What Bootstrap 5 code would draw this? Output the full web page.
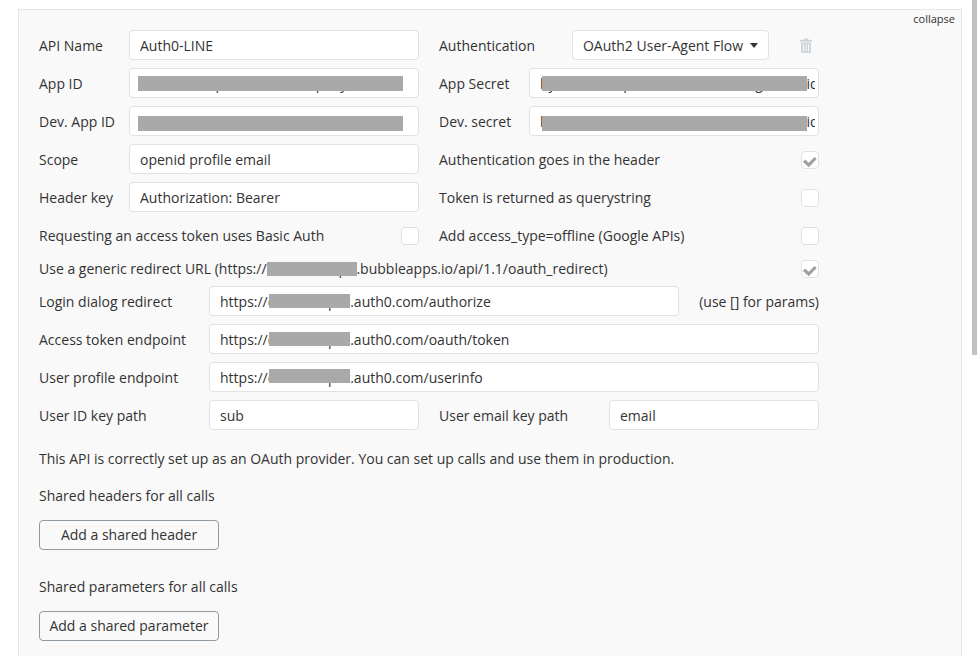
<!DOCTYPE html>
<html lang="en">
<head>
<meta charset="utf-8">
<title>API settings</title>
<link href="https://cdn.jsdelivr.net/npm/bootstrap@5.3.0/dist/css/bootstrap.min.css" rel="stylesheet">
<style>
html,body{height:100%;overflow:hidden;background:#fff;}
body{font-family:"Open Sans",sans-serif;font-size:14px;line-height:20px;color:#333;}
.scroll-thumb{position:fixed;top:0;right:0;width:5px;height:355px;background:#c1c1c1;}
.api-panel{position:relative;margin:9px 15px 0 18px;height:800px;padding:20px 0 0 20px;background:#f9f9f9;border:1px solid #e5e5e5;}
.collapse-link{position:absolute;top:1px;right:6px;font-size:11px;color:#333;text-decoration:none;line-height:16px;}
.form-area{width:780px;}
.line{display:flex;align-items:center;height:30px;margin-bottom:8px;}
.line-check{margin-bottom:3px;}
.line-generic{margin-bottom:3px;}
.half{display:flex;align-items:center;width:380px;flex:none;}
.half+.half{margin-left:20px;}
.lab{flex:none;white-space:nowrap;padding-top:2px;}
.w90{width:90px;}.w170{width:170px;}.w133{width:133px;}
.field{position:relative;flex:1 1 0;min-width:0;}
.api-input.form-control{display:block;width:100%;height:30px;padding:0 10px;font-size:14px;line-height:20px;color:#333;background:#fff;border:1px solid #e1e1e1;border-radius:4px;box-shadow:none;font-family:"Open Sans",sans-serif;}
.api-input.tight-end{padding-right:3px;}
.redact{position:absolute;background:#a9a9a9;}
.rid{left:9px;width:265px;height:15px;top:8px;}
.rsec{left:13px;width:265px;height:15px;top:8px;}
.rdev{top:10px;}
.rurl{left:60px;width:81px;height:14px;top:8px;}
.ruser{top:7px;}
.tick{flex:none;margin-left:auto;margin-top:2px;width:18px;height:18px;background:#fff;border:1px solid #e1e1e1;border-radius:4px;display:flex;align-items:center;justify-content:center;}
.tick svg{display:block;}
.auth-btn.btn{width:197px;height:30px;padding:1px 0 0;font-size:14px;line-height:20px;color:#333;background:#fff;border:1px solid #e1e1e1;border-radius:4px;font-family:"Open Sans",sans-serif;}
.auth-btn.dropdown-toggle::after{margin-left:7px;vertical-align:3px;border-top-width:5px;border-left-width:4px;border-right-width:4px;}
.trash{margin:1px 0 0 31px;flex:none;display:block;}
.params-note{margin-left:20px;white-space:nowrap;padding-top:2px;}
.redir{position:relative;}
.redir-bar{position:absolute;left:228px;top:5px;width:90px;height:14px;background:#a9a9a9;}
.status{margin:19px 0 0;}
.sect{margin:17px 0 14px;}
.sect2{margin:27px 0 14px;}
.add-btn.btn{display:block;width:180px;height:30px;padding:0;font-size:14px;line-height:20px;color:#333;background:transparent;border:1px solid #8e9ba3;border-radius:4px;font-family:"Open Sans",sans-serif;}
</style>
</head>
<body>
<div class="scroll-thumb"></div>
<div class="api-panel">
  <a class="collapse-link" href="#">collapse</a>
  <div class="form-area">
    <div class="line">
      <div class="half"><span class="lab w90">API Name</span><div class="field"><input class="form-control api-input" value="Auth0-LINE"></div></div>
      <div class="half"><span class="lab w133">Authentication</span>
        <div class="dropdown"><button class="btn auth-btn dropdown-toggle" type="button" data-bs-toggle="dropdown">OAuth2 User-Agent Flow</button></div>
        <svg class="trash" width="12" height="15" viewBox="0 0 12 15" fill="#cdd5d9"><path d="M4 .4h4l.8 1.6H12v1.7H0V2h3.2zM1 4.6h10v8.9A1.5 1.5 0 0 1 9.500 15h-7A1.500 1.500 0 0 1 1 13.500zM3 6v7.300h1V6zm2.500 0v7.300h1V6zM8 6v7.300h1V6z"/></svg>
      </div>
    </div>
    <div class="line">
      <div class="half"><span class="lab w90">App ID</span><div class="field"><input class="form-control api-input" value="123456789lp12345678901lp12y123456"><span class="redact rid"></span></div></div>
      <div class="half"><span class="lab w90">App Secret</span><div class="field"><input class="form-control api-input tight-end" value="by12345678lp123456789012345lg12345liq"><span class="redact rsec"></span></div></div>
    </div>
    <div class="line">
      <div class="half"><span class="lab w90">Dev. App ID</span><div class="field"><input class="form-control api-input" value="123456789lp12345678901lp12y123456"><span class="redact rid rdev"></span></div></div>
      <div class="half"><span class="lab w90">Dev. secret</span><div class="field"><input class="form-control api-input tight-end" value="by12345678lp123456789012345lg12345liq"><span class="redact rsec rdev"></span></div></div>
    </div>
    <div class="line">
      <div class="half"><span class="lab w90">Scope</span><div class="field"><input class="form-control api-input" value="openid profile email"></div></div>
      <div class="half"><span class="lab">Authentication goes in the header</span><span class="tick"><svg width="16" height="16" viewBox="0 0 16 16"><path d="M2 8.7 6.700 13 13.600 6" fill="none" stroke="#a0a0a0" stroke-width="3.200"/></svg></span></div>
    </div>
    <div class="line">
      <div class="half"><span class="lab w90">Header key</span><div class="field"><input class="form-control api-input" value="Authorization: Bearer"></div></div>
      <div class="half"><span class="lab">Token is returned as querystring</span><span class="tick"></span></div>
    </div>
    <div class="line line-check">
      <div class="half"><span class="lab">Requesting an access token uses Basic Auth</span><span class="tick"></span></div>
      <div class="half"><span class="lab">Add access_type=offline (Google APIs)</span><span class="tick"></span></div>
    </div>
    <div class="line line-generic">
      <span class="lab redir">Use a generic redirect URL (https://123456789prl.bubbleapps.io/api/1.1/oauth_redirect)<span class="redir-bar"></span></span><span class="tick"><svg width="16" height="16" viewBox="0 0 16 16"><path d="M2 8.7 6.700 13 13.600 6" fill="none" stroke="#a0a0a0" stroke-width="3.200"/></svg></span>
    </div>
    <div class="line">
      <span class="lab w170">Login dialog redirect</span><div class="field"><input class="form-control api-input" value="https://d123456lp1r.auth0.com/authorize"><span class="redact rurl"></span></div><span class="params-note">(use [] for params)</span>
    </div>
    <div class="line">
      <span class="lab w170">Access token endpoint</span><div class="field"><input class="form-control api-input" value="https://d123456lp1r.auth0.com/oauth/token"><span class="redact rurl"></span></div>
    </div>
    <div class="line">
      <span class="lab w170">User profile endpoint</span><div class="field"><input class="form-control api-input" value="https://d123456lp1r.auth0.com/userinfo"><span class="redact rurl ruser"></span></div>
    </div>
    <div class="line">
      <div class="half"><span class="lab w170">User ID key path</span><div class="field"><input class="form-control api-input" value="sub"></div></div>
      <div class="half"><span class="lab w170">User email key path</span><div class="field"><input class="form-control api-input" value="email"></div></div>
    </div>
    <p class="status">This API is correctly set up as an OAuth provider. You can set up calls and use them in production.</p>
    <p class="sect">Shared headers for all calls</p>
    <button class="btn add-btn" type="button">Add a shared header</button>
    <p class="sect2">Shared parameters for all calls</p>
    <button class="btn add-btn" type="button">Add a shared parameter</button>
  </div>
</div>
<script src="https://cdn.jsdelivr.net/npm/bootstrap@5.3.0/dist/js/bootstrap.bundle.min.js"></script>
</body>
</html>
